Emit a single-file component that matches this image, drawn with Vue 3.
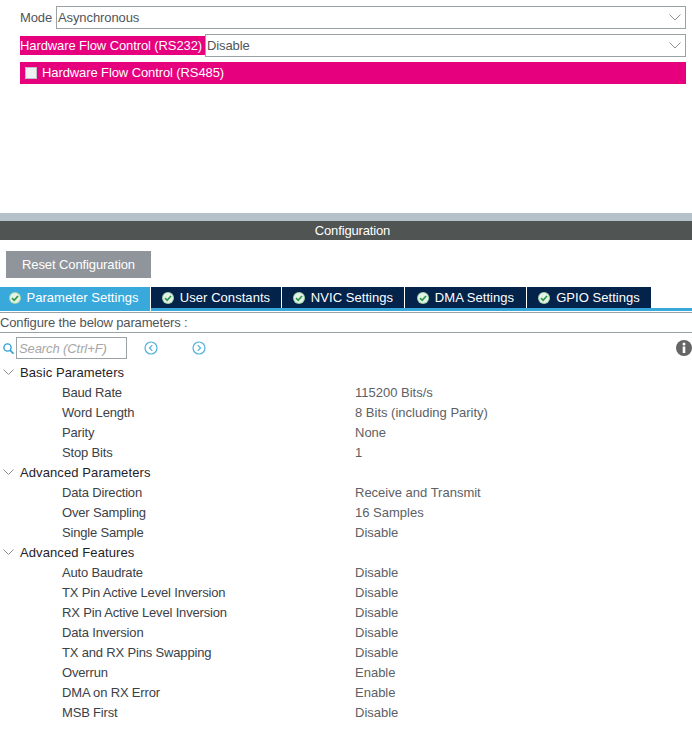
<script setup>
const tabs = [
  { label: 'Parameter Settings', width: 151, active: true },
  { label: 'User Constants', width: 131 },
  { label: 'NVIC Settings', width: 123 },
  { label: 'DMA Settings', width: 122 },
  { label: 'GPIO Settings', width: 124 }
]
const groups = [
  { name: 'Basic Parameters', rows: [
    ['Baud Rate', '115200 Bits/s'], ['Word Length', '8 Bits (including Parity)'], ['Parity', 'None'], ['Stop Bits', '1']
  ] },
  { name: 'Advanced Parameters', rows: [
    ['Data Direction', 'Receive and Transmit'], ['Over Sampling', '16 Samples'], ['Single Sample', 'Disable']
  ] },
  { name: 'Advanced Features', rows: [
    ['Auto Baudrate', 'Disable'], ['TX Pin Active Level Inversion', 'Disable'], ['RX Pin Active Level Inversion', 'Disable'],
    ['Data Inversion', 'Disable'], ['TX and RX Pins Swapping', 'Disable'], ['Overrun', 'Enable'], ['DMA on RX Error', 'Enable'], ['MSB First', 'Disable']
  ] }
]
</script>

<template>
  <div class="page">
    <section class="mode">
      <div class="field">
        <span class="field-label">Mode</span>
        <div class="select">
          <span>Asynchronous</span>
          <svg class="caret" width="12" height="7" viewBox="0 0 12 7"><path d="M.5.5 6 6 11.500.5" fill="none" stroke="#8a9296" /></svg>
        </div>
      </div>
      <div class="field second">
        <span class="field-label warn">Hardware Flow Control (RS232)</span>
        <div class="select">
          <span>Disable</span>
          <svg class="caret" width="12" height="7" viewBox="0 0 12 7"><path d="M.5.5 6 6 11.500.5" fill="none" stroke="#8a9296" /></svg>
        </div>
      </div>
      <label class="check-row">
        <span class="box"></span>
        <span class="check-text">Hardware Flow Control (RS485)</span>
      </label>
    </section>

    <div class="strip"></div>
    <div class="title">Configuration</div>

    <button class="reset">Reset Configuration</button>

    <nav class="tabs">
      <div v-for="t in tabs" :key="t.label" class="tab" :class="{ active: t.active }" :style="{ width: t.width + 'px' }">
        <svg width="12" height="12" viewBox="0 0 12 12">
          <circle cx="6" cy="6" r="6" fill="#a5d6ae" />
          <circle cx="6" cy="6" r="5" fill="#e4f3e6" />
          <path d="M3 6.200 5.200 8.300 9 4" fill="none" stroke="#2f9a4d" stroke-width="1.800" />
        </svg>
        <span>{{ t.label }}</span>
      </div>
    </nav>
    <div class="tab-rule"></div>

    <div class="hint">Configure the below parameters :</div>

    <div class="search-row">
      <svg class="mag" width="11" height="11" viewBox="0 0 11 11">
        <circle cx="4.500" cy="4.500" r="3.600" fill="none" stroke="#2f9fd8" stroke-width="1.400" />
        <path d="M7.200 7.400 10.500 10.700" stroke="#2f9fd8" stroke-width="1.700" />
      </svg>
      <div class="search">Search (Ctrl+F)</div>
      <svg class="nav-btn first" width="14" height="14" viewBox="0 0 14 14">
        <circle cx="7" cy="7" r="6" fill="none" stroke="#4fb0e0" stroke-width="1.200" />
        <path d="M8.300 4.200 5.500 7l2.800 2.800" fill="none" stroke="#4fb0e0" stroke-width="1.200" />
      </svg>
      <svg class="nav-btn" width="14" height="14" viewBox="0 0 14 14">
        <circle cx="7" cy="7" r="6" fill="none" stroke="#4fb0e0" stroke-width="1.200" />
        <path d="M5.700 4.200 8.500 7l-2.800 2.800" fill="none" stroke="#4fb0e0" stroke-width="1.200" />
      </svg>
      <svg class="info" width="16" height="16" viewBox="0 0 16 16">
        <circle cx="8" cy="8" r="8" fill="#666" />
        <circle cx="8" cy="4" r="1.500" fill="#fff" />
        <rect x="6.700" y="6.500" width="2.600" height="6.500" fill="#fff" />
      </svg>
    </div>

    <div class="tree">
      <template v-for="g in groups" :key="g.name">
        <div class="group">
          <svg width="11" height="6" viewBox="0 0 11 6"><path d="M.5.500 5.500 5.500 10.500.5" fill="none" stroke="#8a8f92" /></svg>
          <span>{{ g.name }}</span>
        </div>
        <div v-for="r in g.rows" :key="r[0]" class="row">
          <span class="name">{{ r[0] }}</span>
          <span class="value">{{ r[1] }}</span>
        </div>
      </template>
    </div>
  </div>
</template>

<style scoped>
.page {
  width: 692px;
  height: 745px;
  overflow: hidden;
  background: #fff;
  font-family: "Liberation Sans", Arial, sans-serif;
  font-size: 13px;
  color: #50555a;
  letter-spacing: -0.1px;
}
.mode { height: 213px; padding: 6px 6px 0 20px; box-sizing: border-box; }
.field { display: flex; align-items: center; height: 23px; }
.second { margin-top: 5px; }
.field-label { flex: none; width: 36px; }
.field-label.warn {
  width: 185px;
  height: 19px;
  line-height: 19px;
  background: #e6007e;
  color: #fff;
  white-space: nowrap;
}
.select {
  flex: 1;
  height: 23px;
  box-sizing: border-box;
  border: 1px solid #9aa2a6;
  display: flex;
  align-items: center;
  justify-content: space-between;
  padding: 0 3px 0 1px;
}
.caret { margin-right: 1px; }
.check-row {
  display: flex;
  align-items: center;
  gap: 5px;
  height: 22px;
  margin-top: 5px;
  padding-left: 5px;
  background: #e6007e;
  color: #fff;
}
.check-text { margin-bottom: 2px; }
.box {
  width: 12px;
  height: 12px;
  box-sizing: border-box;
  background: #eef0f1;
  border: 1px solid #bcc2c6;
}
.strip { height: 8px; background: #b6c2c9; }
.title {
  height: 19px;
  line-height: 19px;
  padding-left: 13px;
  background: #505452;
  color: #fff;
  text-align: center;
  letter-spacing: -0.15px;
}
.reset {
  display: block;
  width: 145px;
  height: 27px;
  margin: 11px 0 9px 6px;
  padding: 0;
  border: 0;
  background: #90959b;
  color: #fff;
  font: inherit;
  letter-spacing: -0.1px;
}
.tabs { display: flex; align-items: flex-start; height: 24px; }
.tab {
  display: flex;
  align-items: center;
  justify-content: center;
  gap: 6px;
  height: 21px;
  box-sizing: border-box;
  background: #03234b;
  color: #fff;
  border-right: 1px solid #fff;
  letter-spacing: 0.05px;
  white-space: nowrap;
}
.tab:last-child { border-right: 0; }
.tab.active { height: 24px; padding: 0 2px 3px 0; gap: 5px; background: #39a9dc; }
.tab-rule {
  height: 5px;
  margin-top: -3px;
  box-sizing: border-box;
  background: #39a9dc;
  border-bottom: 1px solid #9aa2a6;
  box-shadow: inset 0 -1px 0 #fff;
}
.hint {
  height: 20px;
  line-height: 20px;
  box-sizing: border-box;
  border-bottom: 1px solid #9aa2a6;
  letter-spacing: -0.15px;
}
.search-row {
  display: flex;
  align-items: center;
  height: 22px;
  margin-top: 4px;
  padding-left: 3px;
}
.mag { margin-right: 2px; }
.search {
  width: 111px;
  height: 22px;
  line-height: 21px;
  box-sizing: border-box;
  border: 1px solid #9aa2a6;
  padding-left: 2px;
  font-style: italic;
  color: #a6a6a6;
}
.nav-btn { margin-left: 34px; }
.nav-btn.first { margin-left: 17px; }
.info { margin-left: auto; }
.tree { margin-top: 3px; }
.group, .row { display: flex; align-items: center; height: 20px; }
.group { color: #1f2328; letter-spacing: 0.1px; }
.group svg { margin: 0 6px 0 3px; }
.row .name { width: 293px; margin-left: 62px; flex: none; color: #3c4148; letter-spacing: -0.17px; }
.row .value { color: #5c6166; letter-spacing: 0; }
</style>
